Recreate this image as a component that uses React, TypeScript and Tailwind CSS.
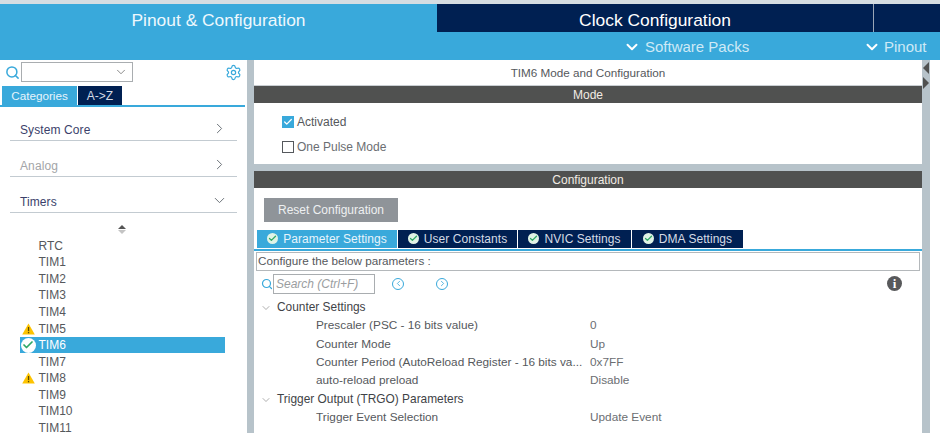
import { Check, ChevronDown, ChevronLeft, ChevronRight, Search, Settings } from 'lucide-react';

const FONT = "font-['Liberation_Sans',Arial,sans-serif]";

const timers = ['RTC', 'TIM1', 'TIM2', 'TIM3', 'TIM4', 'TIM5', 'TIM6', 'TIM7', 'TIM8', 'TIM9', 'TIM10', 'TIM11'];
const warned = ['TIM5', 'TIM8'];

const params = [
  {
    title: 'Counter Settings',
    rows: [
      ['Prescaler (PSC - 16 bits value)', '0'],
      ['Counter Mode', 'Up'],
      ['Counter Period (AutoReload Register - 16 bits va...', '0x7FF'],
      ['auto-reload preload', 'Disable'],
    ],
  },
  {
    title: 'Trigger Output (TRGO) Parameters',
    rows: [['Trigger Event Selection', 'Update Event']],
  },
];

const Warning = () => (
  <svg width="13" height="12" viewBox="0 0 13 12">
    <path d="M6.5 0.5 L12.8 11.5 H0.2 Z" fill="#fdc300" />
    <rect x="5.9" y="4" width="1.3" height="4.2" fill="#5b4a00" />
    <rect x="5.9" y="9" width="1.3" height="1.3" fill="#5b4a00" />
  </svg>
);

const TabCheck = () => (
  <span className="flex size-[11px] items-center justify-center rounded-full bg-[#dff3e6]">
    <Check size={9} strokeWidth={3.5} className="text-[#2fa866]" />
  </span>
);

const Category = ({ label, muted, open, first }: { label: string; muted?: boolean; open?: boolean; first?: boolean }) => (
  <div className={`mx-[10px] flex ${first ? 'h-[34px]' : 'h-[36px]'} items-end justify-between border-b border-[#c3cbd1] pb-[1.5px] pl-[10px] pr-[9px]`}>
    <span className={`text-[12px] leading-[18px] tracking-[0.1px] ${muted ? 'text-[#a3a5a8]' : 'text-[#3b3f6b]'}`}>{label}</span>
    {open ? (
      <ChevronDown size={17} strokeWidth={1.4} className="mb-[2px] text-[#6b7278]" />
    ) : (
      <ChevronRight size={17} strokeWidth={1.4} className="mb-[2px] text-[#6b7278]" />
    )}
  </div>
);

const Sidebar = () => (
  <aside className="flex w-[247px] shrink-0 flex-col overflow-hidden bg-white">
    <div className="flex h-[24px] shrink-0 items-center px-[5px]">
      <Search size={15} strokeWidth={2.4} className="text-[#39a9db]" />
      <div className="ml-[1px] flex h-[20px] w-[112px] items-center justify-end border border-[#a9adb0] pr-[4px]">
        <ChevronDown size={14} strokeWidth={1.3} className="text-[#666]" />
      </div>
      <Settings size={17} strokeWidth={1.7} className="ml-auto text-[#39a9db]" />
    </div>
    <div className="mr-[2px] flex h-[23px] shrink-0 items-end gap-[1px] border-b-2 border-[#39a9db] pl-[2px]">
      <div className="flex h-[19px] w-[75px] items-center justify-center bg-[#39a9db] text-[11.7px] text-[#e6f4fb]">Categories</div>
      <div className="flex h-[19px] w-[44px] items-center justify-center bg-[#002052] text-[12px] text-[#d5dbe5]">A-&gt;Z</div>
    </div>
    <div className="flex shrink-0 flex-col">
      <Category label="System Core" first />
      <Category label="Analog" muted />
      <Category label="Timers" open />
    </div>
    <div className="flex h-[24px] shrink-0 flex-col items-center justify-center gap-[1px] pr-[3px] pt-[8px]">
      <span className="size-0 border-x-[4px] border-b-[4px] border-x-transparent border-b-[#555]" />
      <span className="size-0 border-x-[4px] border-t-[4px] border-x-transparent border-t-[#c4c4c4]" />
    </div>
    <ul className="mt-[0.5px] shrink-0">
      {timers.map((t) => (
        <li
          key={t}
          className={`mr-[22px] ml-[20px] flex h-[16.55px] items-center text-[12px] ${t === 'TIM6' ? 'bg-[#39a9db] text-white' : 'text-[#55585c]'}`}
        >
          <span className="flex w-[18.5px] shrink-0 items-center justify-center pr-[2px]">
            {warned.includes(t) && <Warning />}
            {t === 'TIM6' && (
              <span className="flex size-[15px] items-center justify-center rounded-full bg-white">
                <Check size={12} strokeWidth={3.5} className="text-[#2fa866]" />
              </span>
            )}
          </span>
          {t}
        </li>
      ))}
    </ul>
  </aside>
);

const SectionBar = ({ label }: { label: string }) => (
  <div className="flex h-[17px] shrink-0 items-center justify-center bg-[#505150] text-[12px] leading-none text-[#f2ece4]">{label}</div>
);

const tabs = [
  { label: 'Parameter Settings', width: 'w-[140px]', active: true },
  { label: 'User Constants', width: 'w-[119px]' },
  { label: 'NVIC Settings', width: 'w-[113px]' },
  { label: 'DMA Settings', width: 'w-[111px]' },
];

const MainPanel = () => (
  <main className="flex w-[668px] shrink-0 flex-col overflow-hidden">
    <div className="flex h-[26px] shrink-0 items-center justify-center border-b border-[#c9ced2] bg-white pt-[1px] text-[11.7px] text-[#55585c]">
      TIM6 Mode and Configuration
    </div>
    <SectionBar label="Mode" />
    <div className="flex h-[61px] shrink-0 flex-col gap-[12.5px] bg-white pl-[28px] pt-[13px]">
      <label className="flex h-[12px] items-center gap-[3px] text-[12px] text-[#55585c]">
        <span className="flex size-[12px] items-center justify-center bg-[#39a9db]">
          <Check size={10} strokeWidth={3} className="text-white" />
        </span>
        Activated
      </label>
      <label className="flex h-[12px] items-center gap-[3px] text-[12px] text-[#6b6e72]">
        <span className="size-[12px] border border-[#55585c] bg-white" />
        One Pulse Mode
      </label>
    </div>
    <div className="h-[7px] shrink-0" />
    <SectionBar label="Configuration" />
    <div className="flex min-h-0 flex-1 flex-col bg-white">
      <div className="mt-[10px] ml-[10px] flex h-[24px] w-[134px] shrink-0 items-center justify-center bg-[#8f9499] text-[12px] text-[#eef0f1]">
        Reset Configuration
      </div>
      <div className="mt-[8px] flex h-[21px] shrink-0 items-start gap-[1px] border-b-2 border-[#39a9db] pl-[3px]">
        {tabs.map((tab) => (
          <div
            key={tab.label}
            className={`flex h-[18px] ${tab.width} items-center justify-center gap-[5px] pb-[1px] text-[12px] tracking-[0.05px] ${tab.active ? 'bg-[#39a9db] text-[#e6f4fb]' : 'bg-[#002052] text-[#d5dbe5]'}`}
          >
            <TabCheck />
            {tab.label}
          </div>
        ))}
      </div>
      <div className="mt-[1px] ml-[2px] mr-[2px] flex h-[19px] shrink-0 items-center border border-[#b4b8bb] pb-[1px] pl-[1px] text-[11.7px] text-[#55585c]">
        Configure the below parameters :
      </div>
      <div className="mt-[3px] flex h-[19px] shrink-0 items-center pl-[7px] pr-[20px]">
        <Search size={12} strokeWidth={2.4} className="text-[#39a9db]" />
        <div className="flex h-[20px] w-[102px] items-center border border-[#a9adb0] pl-[2px] text-[12px] italic text-[#9a9da0]">Search (Ctrl+F)</div>
        <span className="ml-[17px] flex size-[12px] items-center justify-center rounded-full border border-[#39a9db]">
          <ChevronLeft size={9} strokeWidth={2.2} className="text-[#39a9db]" />
        </span>
        <span className="ml-[32px] flex size-[12px] items-center justify-center rounded-full border border-[#39a9db]">
          <ChevronRight size={9} strokeWidth={2.2} className="text-[#39a9db]" />
        </span>
        <span className="ml-auto flex size-[15px] items-center justify-center rounded-full bg-[#58595b] font-['Liberation_Serif',serif] text-[13px] font-bold leading-none text-white">i</span>
      </div>
      <div className="mt-[5.5px]">
        {params.map((group) => (
          <div key={group.title}>
            <div className="flex h-[18.4px] items-center pl-[6px] text-[11.9px] text-[#3f4347]">
              <ChevronDown size={12} strokeWidth={1.2} className="mr-[5px] text-[#777]" />
              {group.title}
            </div>
            {group.rows.map(([name, value]) => (
              <div key={name} className="flex h-[18.4px] items-center pl-[62px] text-[11.8px] text-[#55585c]">
                <span className="w-[274px] shrink-0 whitespace-nowrap">{name}</span>
                <span className="text-[#6b6e72]">{value}</span>
              </div>
            ))}
          </div>
        ))}
      </div>
    </div>
  </main>
);

export default function App() {
  return (
    <div className={`${FONT} flex h-[433px] w-[940px] flex-col overflow-hidden bg-white`}>
      <div className="h-[4px] shrink-0 bg-[#d5dde2]" />
      <header className="flex h-[28px] shrink-0 text-[17.4px]">
        <div className="flex w-[437px] items-center justify-center bg-[#39a9db] pt-[4px] text-[#eef8fd]">Pinout &amp; Configuration</div>
        <div className="flex flex-1 bg-[#002052] text-white">
          <div className="flex flex-1 items-center justify-center border-r border-[#9aa6b6] pt-[4px]">Clock Configuration</div>
          <div className="w-[66px]" />
        </div>
      </header>
      <div className="flex h-[28px] shrink-0 items-center bg-[#39a9db] pt-[2px] text-[15px] text-[#cfe9f6]">
        <div className="ml-[623px] flex w-[240px] items-center gap-[4px]">
          <ChevronDown size={18} strokeWidth={2.6} className="text-white" />
          Software Packs
        </div>
        <div className="flex items-center gap-[3px]">
          <ChevronDown size={18} strokeWidth={2.6} className="text-white" />
          Pinout
        </div>
      </div>
      <div className="flex min-h-0 flex-1">
        <Sidebar />
        <div className="w-[7px] shrink-0 bg-[#b7c3ca]" />
        <div className="flex min-h-0 flex-1 bg-[#b7c3ca]">
          <MainPanel />
          <div className="flex w-[8px] shrink-0 flex-col items-center gap-[3px] pt-[2px]">
            <span className="size-0 border-y-[6px] border-r-[6px] border-y-transparent border-r-[#505150]" />
            <span className="size-0 border-y-[6px] border-l-[6px] border-y-transparent border-l-[#505150]" />
          </div>
          <div className="flex-1 bg-white" />
        </div>
      </div>
    </div>
  );
}
